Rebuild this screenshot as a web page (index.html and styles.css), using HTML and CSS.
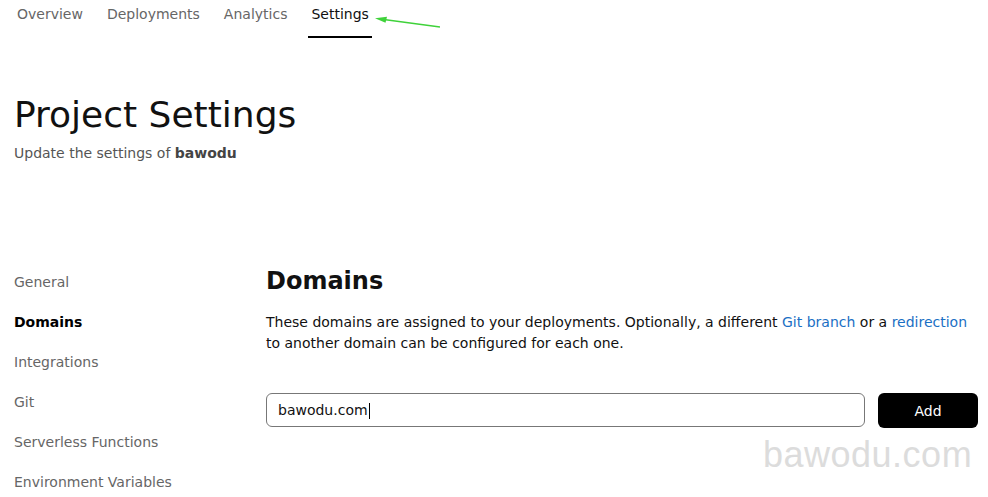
FILE: index.html
```html
<!DOCTYPE html>
<html lang="en">
<head>
<meta charset="utf-8">
<title>Project Settings</title>
<link rel="stylesheet" href="styles.css">
</head>
<body>
<nav class="tabs">
  <a class="tab">Overview</a>
  <a class="tab">Deployments</a>
  <a class="tab">Analytics</a>
  <a class="tab active">Settings</a>
</nav>
<svg class="arrow" width="80" height="20" viewBox="0 0 80 20">
  <line x1="8" y1="4.3" x2="66" y2="12" stroke="#3fd23a" stroke-width="1.4"/>
  <polygon points="1,3.3 13,1.8 11.5,7.8" fill="#3fd23a"/>
</svg>
<header class="header">
  <h1 class="title">Project Settings</h1>
  <p class="subtitle">Update the settings of <b>bawodu</b></p>
</header>
<div class="layout">
  <aside class="sidebar">
    <a class="side-item">General</a>
    <a class="side-item active">Domains</a>
    <a class="side-item">Integrations</a>
    <a class="side-item">Git</a>
    <a class="side-item">Serverless Functions</a>
    <a class="side-item">Environment Variables</a>
  </aside>
  <main class="main">
    <h2 class="section-title">Domains</h2>
    <p class="desc">These domains are assigned to your deployments. Optionally, a different <a class="link">Git branch</a> or a <a class="link">redirection</a> to another domain can be configured for each one.</p>
    <div class="form-row">
      <div class="field">bawodu.com<span class="caret"></span></div>
      <button class="btn">Add</button>
    </div>
  </main>
</div>
<div class="watermark">bawodu.com</div>
</body>
</html>
```
FILE: styles.css
```css
html, body {
  margin: 0;
  padding: 0;
  background: #fff;
}
body {
  font-family: "DejaVu Sans", sans-serif;
  font-size: 14px;
  color: #111;
  position: relative;
}
.tabs {
  display: flex;
  gap: 18px;
  padding-left: 14px;
}
.tab {
  padding: 4px 3px 12px;
  line-height: 20px;
  border-bottom: 2px solid transparent;
  color: #666;
}
.tab.active {
  color: #111;
  border-bottom-color: #000;
}
.arrow {
  position: absolute;
  left: 374px;
  top: 15px;
}
.header {
  padding: 0 14px;
}
.title {
  margin: 56px 0 0;
  font-size: 36px;
  line-height: 42px;
  font-weight: normal;
  color: #111;
}
.subtitle {
  margin: 7px 0 0;
  line-height: 20px;
  color: #555;
}
.subtitle b {
  color: #444;
}
.layout {
  display: grid;
  grid-template-columns: 252px 712px;
  padding-left: 14px;
  margin-top: 103px;
}
.sidebar {
  display: flex;
  flex-direction: column;
  gap: 20px;
  padding-top: 6px;
}
.side-item {
  line-height: 20px;
  color: #666;
}
.side-item.active {
  color: #000;
  font-weight: bold;
}
.main {
  padding-top: 1px;
}
.section-title {
  margin: 0;
  font-size: 24px;
  line-height: 28px;
  font-weight: bold;
  color: #111;
}
.desc {
  margin: 17px 0 0;
  line-height: 21px;
  color: #111;
}
.link {
  color: #1a6fc4;
}
.form-row {
  display: flex;
  gap: 13px;
  margin-top: 39px;
  align-items: flex-start;
}
.field {
  flex: 1;
  box-sizing: border-box;
  height: 34px;
  border: 1px solid #777;
  border-radius: 6px;
  padding: 0 11px;
  display: flex;
  align-items: center;
  line-height: 20px;
  color: #111;
}
.caret {
  display: inline-block;
  width: 1px;
  height: 16px;
  background: #000;
  margin-left: 1px;
  position: relative;
  top: 1px;
}
.btn {
  width: 100px;
  height: 35px;
  border: none;
  border-radius: 6px;
  background: #000;
  color: #fff;
  font-family: "DejaVu Sans", sans-serif;
  font-size: 14px;
  padding: 0;
}
.watermark {
  position: absolute;
  left: 763px;
  top: 437px;
  font-family: "Liberation Sans", Arial, sans-serif;
  font-size: 36px;
  line-height: 36px;
  letter-spacing: 0.5px;
  color: #dcdcdc;
}
```
